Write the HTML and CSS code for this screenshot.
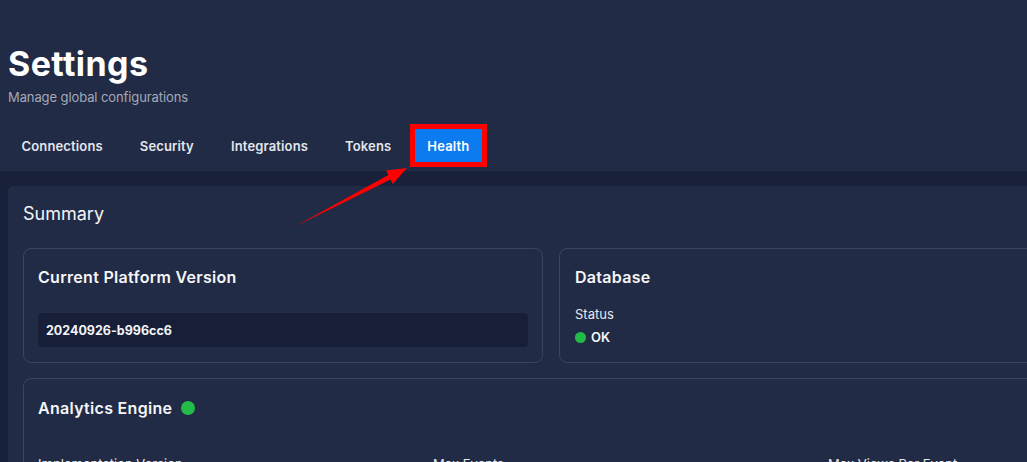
FILE: index.html
```html
<!DOCTYPE html>
<html>
<head>
<meta charset="utf-8">
<link rel="stylesheet" href="styles.css">
</head>
<body>
<header class="page-header">
  <h1 class="title">Settings</h1>
  <p class="subtitle">Manage global configurations</p>
  <nav class="tabs">
    <span class="tab">Connections</span>
    <span class="tab">Security</span>
    <span class="tab">Integrations</span>
    <span class="tab">Tokens</span>
    <span class="tab tab-active">Health</span>
  </nav>
</header>
<main class="main">
  <section class="panel">
    <h2 class="panel-title">Summary</h2>
    <div class="grid">
      <div class="card">
        <h3 class="card-title">Current Platform Version</h3>
        <div class="version-box">20240926-b996cc6</div>
      </div>
      <div class="card">
        <h3 class="card-title">Database</h3>
        <div class="label label-status">Status</div>
        <div class="status"><span class="dot"></span>OK</div>
      </div>
      <div class="card card-wide">
        <h3 class="card-title">Analytics Engine <span class="dot dot-lg"></span></h3>
        <div class="cols">
          <div class="label">Implementation Version</div>
          <div class="label">Max Events</div>
          <div class="label">Max Views Per Event</div>
        </div>
      </div>
    </div>
  </section>
</main>
<svg class="arrow" width="1027" height="462" viewBox="0 0 1027 462">
  <polygon points="295,226.5 388.4,175 386.1,170.6 407,168 392.8,184 390.6,179.4" fill="#ff0000"/>
</svg>
</body>
</html>
```

FILE: styles.css
```css
html, body {
  margin: 0;
  padding: 0;
}
body {
  background: #222b45;
  font-family: Inter, "Noto Sans", "DejaVu Sans", sans-serif;
  color: #ffffff;
  width: 1027px;
  height: 462px;
  overflow: hidden;
  position: relative;
}
.page-header {
  padding: 44px 8px 9px 8px;
}
.title {
  margin: 0;
  font-size: 34px;
  line-height: 40px;
  font-weight: 700;
  letter-spacing: 0.4px;
  color: #ffffff;
}
.subtitle {
  margin: 4px 0 0 0;
  font-size: 13px;
  line-height: 18px;
  color: #a3a9b8;
  letter-spacing: -0.1px;
}
.tabs {
  display: flex;
  gap: 10px;
  margin-top: 23px;
}
.tab {
  display: flex;
  align-items: center;
  height: 33px;
  padding: 0 13.5px;
  font-size: 13px;
  font-weight: 600;
  letter-spacing: 0.15px;
  color: #e3e6ec;
}
.tab-active {
  background: #0b7bef;
  color: #ffffff;
  padding: 0 12.5px;
  outline: 5px solid #ff0000;
  outline-offset: 0;
}
.main {
  background: #18203a;
  padding: 15px 0 0 8px;
  height: 300px;
}
.panel {
  background: #222b45;
  border-radius: 5px 0 0 0;
  padding: 16px 15px 0 15px;
  width: 1072px;
  height: 290px;
}
.panel-title {
  margin: 0;
  font-size: 18px;
  line-height: 24px;
  font-weight: 400;
  color: #f3f4f7;
}
.grid {
  display: grid;
  grid-template-columns: 520px 520px;
  column-gap: 16px;
  row-gap: 15px;
  margin-top: 22px;
}
.card {
  border: 1px solid #3a4360;
  border-radius: 8px;
  padding: 18px 14px 15px 14px;
}
.card + .card {
  padding-left: 15px;
}
.card-wide {
  grid-column: 1 / span 2;
  padding-top: 19px;
}
.card.card-wide {
  padding-left: 14px;
}
.card-title {
  margin: 0;
  font-size: 16px;
  line-height: 20px;
  font-weight: 600;
  letter-spacing: 0.3px;
  color: #f5f6f8;
  display: flex;
  align-items: center;
  gap: 9px;
}
.version-box {
  margin-top: 26px;
  height: 34px;
  background: #171f38;
  border-radius: 4px;
  display: flex;
  align-items: center;
  padding-left: 8px;
  font-size: 12.5px;
  font-weight: 700;
  color: #f3f4f7;
}
.label {
  font-size: 13px;
  line-height: 18px;
  color: #e6e8ee;
}
.label-status {
  margin-top: 18px;
}
.status {
  margin-top: 5px;
  display: flex;
  align-items: center;
  gap: 5px;
  font-size: 13px;
  line-height: 18px;
  font-weight: 600;
  color: #f5f6f8;
}
.dot {
  display: inline-block;
  width: 11px;
  height: 11px;
  border-radius: 50%;
  background: #22bb48;
}
.dot-lg {
  width: 14px;
  height: 14px;
}
.cols {
  display: grid;
  grid-template-columns: 395px 395px 1fr;
  margin-top: 37px;
}
.arrow {
  position: absolute;
  left: 0;
  top: 0;
  pointer-events: none;
}
```
